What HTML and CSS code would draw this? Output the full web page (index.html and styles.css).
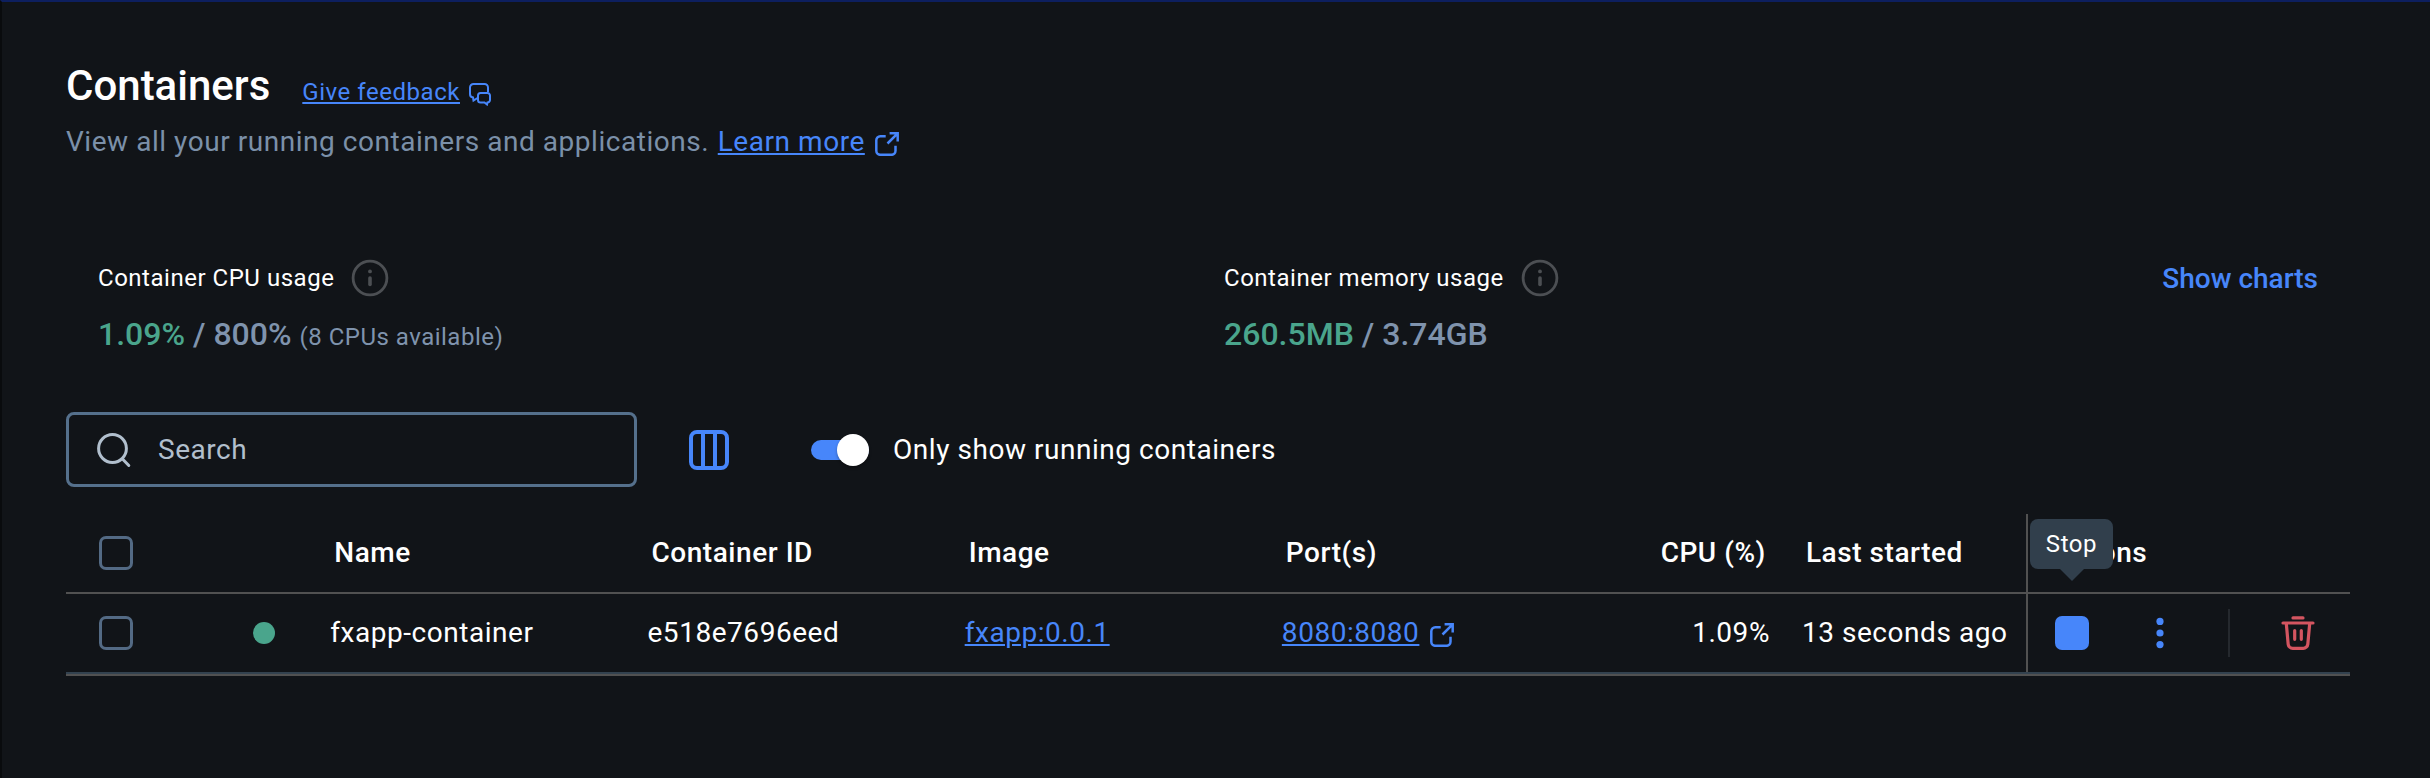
FILE: index.html
```html
<!DOCTYPE html>
<html lang="en">
<head>
<meta charset="utf-8">
<title>Containers</title>
<link rel="stylesheet" href="styles.css">
</head>
<body>
<svg class="sprite" aria-hidden="true">
  <symbol id="external" viewBox="0 0 24 24">
    <path d="M10.7 4.3H5.3a4 4 0 0 0-4 4v10.5a4 4 0 0 0 4 4h11.2a4 4 0 0 0 4-4v-5.1M14.6 1.3h8.1v8.2M22.4 1.6l-9.9 9.9" fill="none" stroke="currentColor" stroke-width="2.5"/>
  </symbol>
  <symbol id="info" viewBox="0 0 38 38">
    <circle cx="19" cy="19" r="16.9" fill="none" stroke="currentColor" stroke-width="2.8"/>
    <circle cx="19" cy="12.4" r="1.9" fill="currentColor"/>
    <path d="M19 19v6.4" stroke="currentColor" stroke-width="3.6" stroke-linecap="round"/>
  </symbol>
</svg>
<main class="page">
  <header class="heading">
    <h1 class="title">Containers</h1>
    <a class="link feedback">Give feedback</a>
    <svg class="chat-icon" viewBox="0 0 22 23" fill="none" stroke="currentColor" stroke-width="2">
      <path d="M19 9V4.500A3.500 3.500 0 0 0 15.500 1H4.500A3.500 3.500 0 0 0 1 4.500v6.500a3.500 3.500 0 0 0 3 3.500l.5 3 4-2.500"/>
      <path d="M11.500 10h7a2.500 2.500 0 0 1 2.500 2.500v4.500a2.500 2.500 0 0 1-2.500 2.500l-.5 2-2.500-2h-4a2.500 2.500 0 0 1-2.500-2.500v-4.500a2.500 2.500 0 0 1 2.500-2.500z"/>
    </svg>
  </header>
  <p class="subtitle">View all your running containers and applications. <a class="link learn">Learn more</a><svg class="external-icon learn-icon"><use href="#external"/></svg></p>

  <section class="stats">
    <div class="stat">
      <div class="stat-label">Container CPU usage<svg class="info-icon"><use href="#info"/></svg></div>
      <div class="stat-value"><span class="used">1.09%</span> / 800% <span class="note">(8 CPUs available)</span></div>
    </div>
    <div class="stat">
      <div class="stat-label">Container memory usage<svg class="info-icon"><use href="#info"/></svg></div>
      <div class="stat-value"><span class="used">260.5MB</span> / 3.74GB</div>
    </div>
    <a class="show-charts">Show charts</a>
  </section>

  <section class="toolbar">
    <div class="search">
      <svg class="search-icon" viewBox="0 0 36 36" fill="none" stroke="currentColor" stroke-width="3" stroke-linecap="round">
        <circle cx="16.500" cy="16.500" r="13.900"/>
        <path d="M26.500 27l6.300 6.500"/>
      </svg>
      <span>Search</span>
    </div>
    <svg class="columns-icon" viewBox="0 0 40 40" fill="none" stroke="currentColor" stroke-width="4">
      <rect x="2" y="2" width="36" height="36" rx="6"/>
      <path d="M14 2v36M26 2v36"/>
    </svg>
    <span class="switch"><span class="knob"></span></span>
    <span class="switch-label">Only show running containers</span>
  </section>

  <section class="table">
    <div class="row head">
      <div class="cell select"><span class="checkbox"></span></div>
      <div class="cell">Name</div>
      <div class="cell">Container ID</div>
      <div class="cell">Image</div>
      <div class="cell">Port(s)</div>
      <div class="cell cpu">CPU (%)</div>
      <div class="cell started">Last started</div>
      <div class="cell actions">Actions</div>
    </div>
    <div class="row">
      <div class="cell select"><span class="checkbox"></span><span class="status"></span></div>
      <div class="cell">fxapp-container</div>
      <div class="cell">e518e7696eed</div>
      <div class="cell"><a class="link">fxapp:0.0.1</a></div>
      <div class="cell"><a class="link">8080:8080</a><svg class="external-icon port-icon"><use href="#external"/></svg></div>
      <div class="cell cpu">1.09%</div>
      <div class="cell started">13 seconds ago</div>
      <div class="cell actions">
        <span class="stop"><span class="tooltip">Stop</span></span>
        <svg class="more-icon" viewBox="0 0 8 32" fill="currentColor"><circle cx="4" cy="4.400" r="3.600"/><circle cx="4" cy="16" r="3.600"/><circle cx="4" cy="27.600" r="3.600"/></svg>
        <span class="divider"></span>
        <svg class="trash-icon" viewBox="0 0 34 34" fill="none" stroke="currentColor" stroke-width="3.200" stroke-linecap="round">
          <path d="M12 1.900h10M2 7h30M5.300 7.500l1.900 20.800a4.500 4.500 0 0 0 4.500 4h10.600a4.500 4.500 0 0 0 4.500-4L28.700 7.500M13.700 14.500v8.800M20.300 14.500v8.800"/>
        </svg>
      </div>
    </div>
  </section>
</main>
</body>
</html>
```

FILE: styles.css
```css
* { box-sizing: border-box; }

body {
  margin: 0;
  background: #111418;
  color: #fff;
  font: 400 28px/33px Roboto, sans-serif;
  letter-spacing: 0.54px;
}

.sprite { position: absolute; width: 0; height: 0; }
svg { flex: none; }

.page {
  height: 778px;
  padding: 55px 80px 0 64px;
  border-top: 2px solid #0d1f5f;
  border-left: 2px solid #090b0d;
}

.link {
  color: #4786fa;
  text-decoration: underline;
  text-decoration-thickness: 2px;
  text-underline-offset: 2px;
}

.heading { display: flex; align-items: baseline; height: 57px; }
.title { margin: 0; font: 500 42px/57px Roboto, sans-serif; letter-spacing: 0; }
.feedback { margin-left: 32px; font-size: 24px; line-height: 28px; }
.chat-icon {
  width: 22px;
  height: 23px;
  margin-left: 9px;
  align-self: flex-start;
  margin-top: 26px;
  color: #4786fa;
}

.subtitle {
  display: flex;
  margin: 11px 0 0;
  color: #7b90a9;
  white-space: pre;
}
.learn { margin-left: 1px; }
.external-icon { width: 24px; height: 24px; color: #4786fa; }
.learn-icon { margin: 7px 0 0 10px; }

.stats {
  display: grid;
  grid-template-columns: 1126px 1fr auto;
  margin-top: 101px;
  padding: 0 32px;
}
.stat-label {
  display: flex;
  align-items: center;
  gap: 17px;
  height: 38px;
  font-size: 24px;
  line-height: 28px;
  letter-spacing: 0.52px;
}
.info-icon { width: 38px; height: 38px; color: #4c4f53; }
.stat-value {
  margin-top: 18px;
  font: 500 32px/38px Roboto, sans-serif;
  letter-spacing: 0;
  color: #7f93ad;
}
.used { color: #4aa58c; }
.note { font-size: 24px; font-weight: 400; line-height: 28px; letter-spacing: 0.5px; }
.show-charts { margin-top: 3px; color: #4786fa; font-weight: 500; letter-spacing: 0; }

.toolbar { display: flex; align-items: center; height: 75px; margin-top: 59px; }
.search {
  display: flex;
  align-items: center;
  width: 571px;
  height: 75px;
  padding-left: 27px;
  border: 3px solid #55708c;
  border-radius: 8px;
  color: #b1bfcd;
}
.search-icon { width: 36px; height: 36px; margin-right: 26px; }
.columns-icon { width: 40px; height: 40px; margin-left: 52px; color: #4786fa; }
.switch {
  display: flex;
  align-items: center;
  justify-content: flex-end;
  width: 58px;
  height: 20px;
  margin-left: 82px;
  border-radius: 10px;
  background: #4786fa;
}
.knob {
  flex: none;
  width: 32px;
  height: 32px;
  border-radius: 50%;
  background: #fff;
  box-shadow: 0 2px 3px rgba(0, 0, 0, 0.3);
}
.switch-label { margin-left: 24px; }

.table { margin-top: 27px; border-bottom: 2px solid #515151; }
.row {
  display: grid;
  grid-template-columns: 264.3px repeat(3, 317.2px) 317px 172.1px 255px 324px;
  height: 80px;
  border-bottom: 2px solid #33424f;
}
.head { border-color: #515151; font-weight: 500; }
.cell { display: flex; align-items: center; padding-bottom: 1px; white-space: nowrap; }
.head .cell { padding-left: 4px; }
.row .select { padding: 0 0 0 33px; }
.row .cpu { justify-content: flex-end; padding-right: 1px; }
.head .cpu { padding-right: 5px; }
.row .started { padding-left: 31px; }
.head .started { padding-left: 35px; }
.port-icon { margin: 5px 0 0 10.5px; }

.checkbox {
  width: 34px;
  height: 34px;
  border: 3px solid #536a84;
  border-radius: 7px;
}
.status {
  width: 22px;
  height: 22px;
  margin-left: 120px;
  border-radius: 50%;
  background: #4aa58c;
}

.row .actions { padding: 0 0 0 27px; border-left: 2px solid #515151; }
.head .actions { padding: 0 0 1px 20px; }
.stop {
  position: relative;
  width: 34px;
  height: 34px;
  border-radius: 7px;
  background: #4786fa;
}
.tooltip {
  position: absolute;
  left: -25px;
  top: -97px;
  width: 83px;
  height: 50px;
  border-radius: 8px;
  background: #313f4c;
  font-size: 24px;
  line-height: 50px;
  text-align: center;
}
.tooltip::after {
  content: "";
  position: absolute;
  left: 30px;
  top: 50px;
  border: 12px solid transparent;
  border-top-color: #313f4c;
  border-bottom: 0;
}
.more-icon { width: 8px; height: 32px; margin-left: 67px; color: #4786fa; }
.divider { width: 2px; height: 48px; margin-left: 64px; background: #25292e; }
.trash-icon { width: 34px; height: 34px; margin-left: 51px; color: #d45560; }
```
